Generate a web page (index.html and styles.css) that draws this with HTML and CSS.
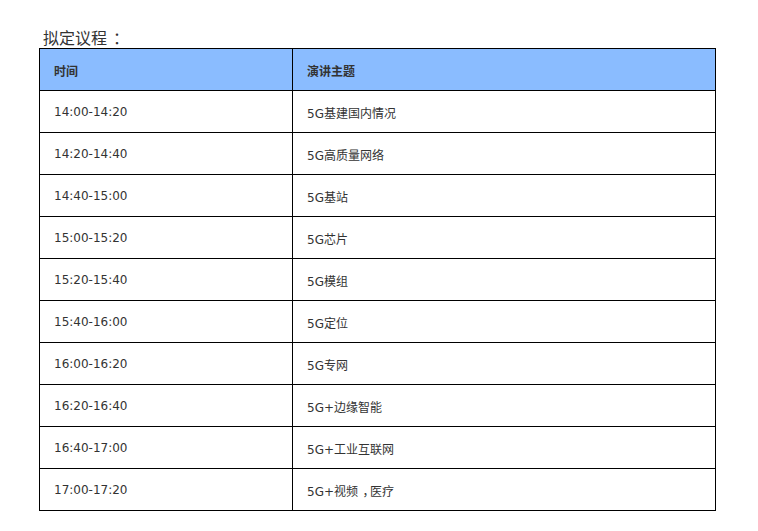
FILE: index.html
```html
<!DOCTYPE html>
<html>
<head>
<meta charset="utf-8">
<link rel="stylesheet" href="styles.css">
</head>
<body>
<div class="page">
  <div class="title">拟定议程<span class="punct">：</span></div>
  <table class="agenda">
    <colgroup><col class="c1"><col class="c2"></colgroup>
    <thead>
      <tr><th>时间</th><th>演讲主题</th></tr>
    </thead>
    <tbody>
      <tr><td>14:00-14:20</td><td>5G基建国内情况</td></tr>
      <tr><td>14:20-14:40</td><td>5G高质量网络</td></tr>
      <tr><td>14:40-15:00</td><td>5G基站</td></tr>
      <tr><td>15:00-15:20</td><td>5G芯片</td></tr>
      <tr><td>15:20-15:40</td><td>5G模组</td></tr>
      <tr><td>15:40-16:00</td><td>5G定位</td></tr>
      <tr><td>16:00-16:20</td><td>5G专网</td></tr>
      <tr><td>16:20-16:40</td><td>5G+边缘智能</td></tr>
      <tr><td>16:40-17:00</td><td>5G+工业互联网</td></tr>
      <tr><td>17:00-17:20</td><td>5G+视频<span class="punct">，</span>医疗</td></tr>
    </tbody>
  </table>
</div>
</body>
</html>
```
FILE: styles.css
```css
html, body { margin: 0; padding: 0; background: #fff; }
body { font-family: "DejaVu Sans", "Noto Sans CJK SC", sans-serif; color: #333; }
.page { padding: 26px 0 0 39px; }
.title { font-size: 16px; line-height: 22px; padding-left: 4px; color: #333; font-family: "Noto Sans CJK SC", sans-serif; }
.punct { padding-left: 0.38em; letter-spacing: -0.38em; }
.agenda { border-collapse: collapse; width: 677px; table-layout: fixed; }
.c1 { width: 253px; }
.agenda th, .agenda td { border: 1px solid #000; height: 41px; padding: 1px 0 0 14px; text-align: left; font-size: 12px; color: #333; box-sizing: border-box; }
.agenda th { background: #8abcff; font-weight: bold; font-family: "Noto Sans CJK SC", sans-serif; }
.agenda tr { height: 42px; }
```
